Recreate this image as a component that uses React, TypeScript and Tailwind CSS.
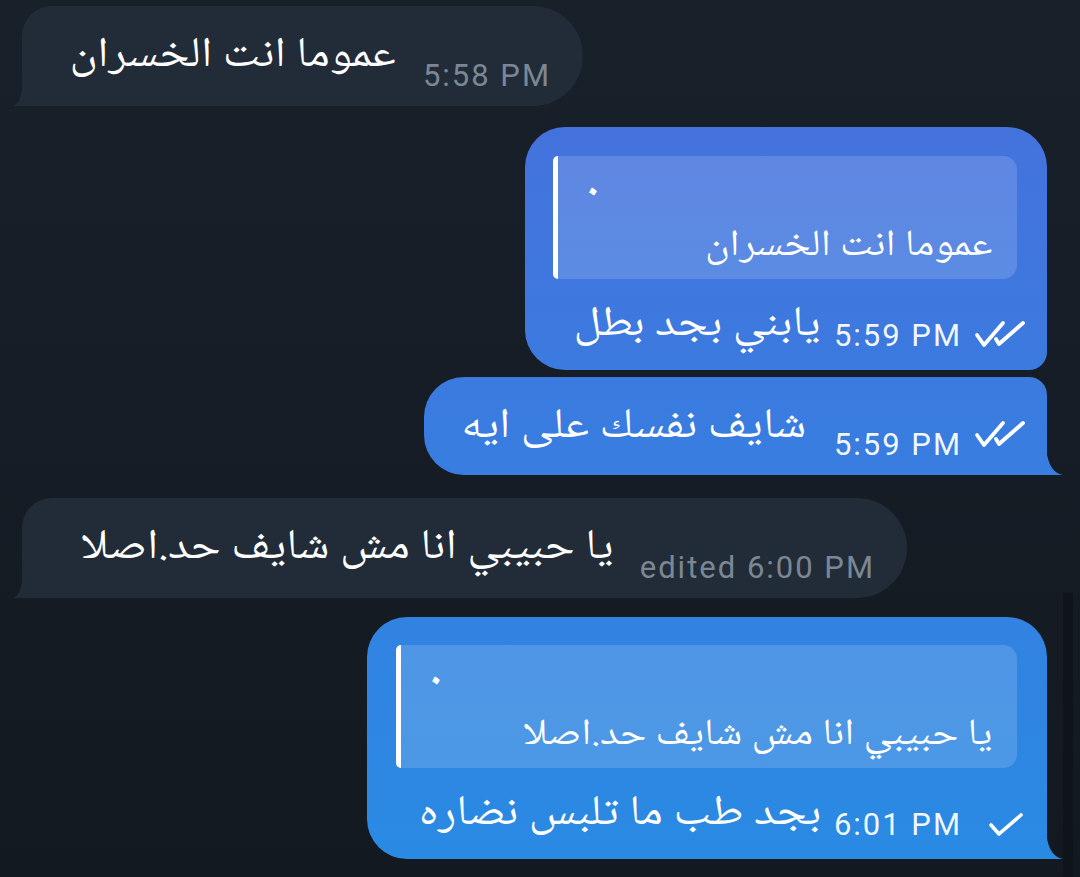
import type { ReactNode } from 'react';

const AR = "[font-family:'Noto_Naskh_Arabic','Noto_Sans_Arabic','DejaVu_Sans',sans-serif]";
const RB = "[font-family:Roboto,'Liberation_Sans',sans-serif]";

function DoubleCheck() {
  return (
    <svg width="52" height="28" viewBox="0 0 52 28" fill="none" stroke="white" strokeWidth="3.8" strokeLinecap="round" strokeLinejoin="round">
      <path d="M4 15 L11 25 L30 3" />
      <path d="M23 19 L26 24 L50 3" />
    </svg>
  );
}

function SingleCheck() {
  return (
    <svg width="38" height="28" viewBox="0 0 38 28" fill="none" stroke="white" strokeWidth="3.6" strokeLinecap="round" strokeLinejoin="round">
      <path d="M4 14 L12 23 L34 4" />
    </svg>
  );
}

// arabic line, the shot is a bit stretched sideways so widen it from the right edge
function Ar({ children, className }: { children: ReactNode; className: string }) {
  return (
    <span dir="rtl" className={`${AR} inline-block origin-right scale-x-[1.13] text-white ${className}`}>{children}</span>
  );
}

// incoming bubble, tail on the bottom left
function Incoming({ width, text, time, gap }: { width: string; text: string; time: string; gap: string }) {
  return (
    <div className={`relative ml-[22px] h-[100px] ${width} bg-[#222c38] rounded-tl-[30px] rounded-r-[50px] rounded-bl-none flex items-end justify-end pr-[32px]`}>
      <svg className="absolute left-[-9px] bottom-0" width="10" height="32" viewBox="0 0 10 32">
        <path d="M10 0 Q10 29 0 32 L10 32 Z" fill="#222c38" />
      </svg>
      <Ar className={`${gap} mb-[25px] text-[42px] leading-[48px]`}>{text}</Ar>
      <span className={`${RB} mb-[12px] text-[31px] leading-[36px] tracking-[2px] text-[#7b8794]`}>{time}</span>
    </div>
  );
}

function Tail() {
  return (
    <div className="absolute right-[-16px] bottom-0 w-[17px] h-[34px] bg-[linear-gradient(180deg,#496edc_0%,#298be3_100%)] bg-fixed [clip-path:path('M0_0_Q0_31_17_34_L0_34_Z')]" />
  );
}

function Reply({ name, text }: { name: string; text: string }) {
  return (
    <div className="flex h-[123px] rounded-l-[6px] rounded-r-[14px] bg-white/15">
      <div className="w-[5px] rounded-l-[6px] bg-white" />
      <div className="flex-1 flex flex-col pt-[2px] pr-[25px]">
        <span className={`${AR} pl-[24px] text-[46px] leading-normal text-white`}>{name}</span>
        <div className="-mt-[4px] flex justify-end">
          <Ar className="text-[37px] leading-[48px]">{text}</Ar>
        </div>
      </div>
    </div>
  );
}

function MetaRow({ text, time, gap, check }: { text: string; time: string; gap: string; check: ReactNode }) {
  return (
    <div className="flex items-end justify-end h-[91px]">
      <Ar className={`${gap} mb-[20px] text-[42px] leading-[48px]`}>{text}</Ar>
      <span className={`${RB} mb-[16px] text-[31px] leading-[36px] tracking-[2px] text-white/95`}>{time}</span>
      {check}
    </div>
  );
}

export default function App() {
  return (
    <div className="relative h-[877px] w-[1080px] overflow-hidden bg-[linear-gradient(180deg,#18202a_0%,#131920_100%)]">
      <div className="flex flex-col pt-[6px]">
        <Incoming width="w-[561px]" text="عموما انت الخسران" time="5:58 PM" gap="mr-[27px]" />

        <div className="relative self-end mr-[33px] mt-[21px] w-[522px] rounded-[40px] rounded-br-[18px] bg-[linear-gradient(180deg,#496edc_0%,#298be3_100%)] bg-fixed pt-[29px] pl-[28px] pr-[22px]">
          <div className="mr-[8px]">
            <Reply name="٠" text="عموما انت الخسران" />
          </div>
          <MetaRow text="يابني بجد بطل" time="5:59 PM" gap="mr-[13px]"
            check={<div className="ml-[11px] mb-[22px]"><DoubleCheck /></div>} />
        </div>

        <div className="relative self-end mr-[33px] mt-[7px] h-[98px] w-[623px] rounded-[40px] rounded-tr-[18px] rounded-br-none bg-[linear-gradient(180deg,#496edc_0%,#298be3_100%)] bg-fixed flex items-end justify-end pr-[22px]">
          <Tail />
          <Ar className="mr-[28px] mb-[23px] text-[42px] leading-[48px]">شايف نفسك على ايه</Ar>
          <span className={`${RB} mb-[12px] text-[31px] leading-[36px] tracking-[2px] text-white/95`}>5:59 PM</span>
          <div className="ml-[11px] mb-[27px]"><DoubleCheck /></div>
        </div>

        <div className="mt-[23px]">
          <Incoming width="w-[885px]" text="يا حبيبي انا مش شايف حد.اصلا" time="edited 6:00 PM" gap="mr-[26px]" />
        </div>

        <div className="relative self-end mr-[33px] mt-[19px] w-[680px] rounded-[40px] rounded-br-none bg-[linear-gradient(180deg,#496edc_0%,#298be3_100%)] bg-fixed pt-[28px] pl-[29px] pr-[22px]">
          <Tail />
          <div className="mr-[8px]">
            <Reply name="٠" text="يا حبيبي انا مش شايف حد.اصلا" />
          </div>
          <MetaRow text="بجد طب ما تلبس نضاره" time="6:01 PM" gap="mr-[13px]"
            check={<div className="ml-[25px] mb-[20px]"><SingleCheck /></div>} />
        </div>
      </div>

      <div className="absolute right-[7px] top-[593px] bottom-0 w-[10px] bg-[#0f141a]" />
    </div>
  );
}
